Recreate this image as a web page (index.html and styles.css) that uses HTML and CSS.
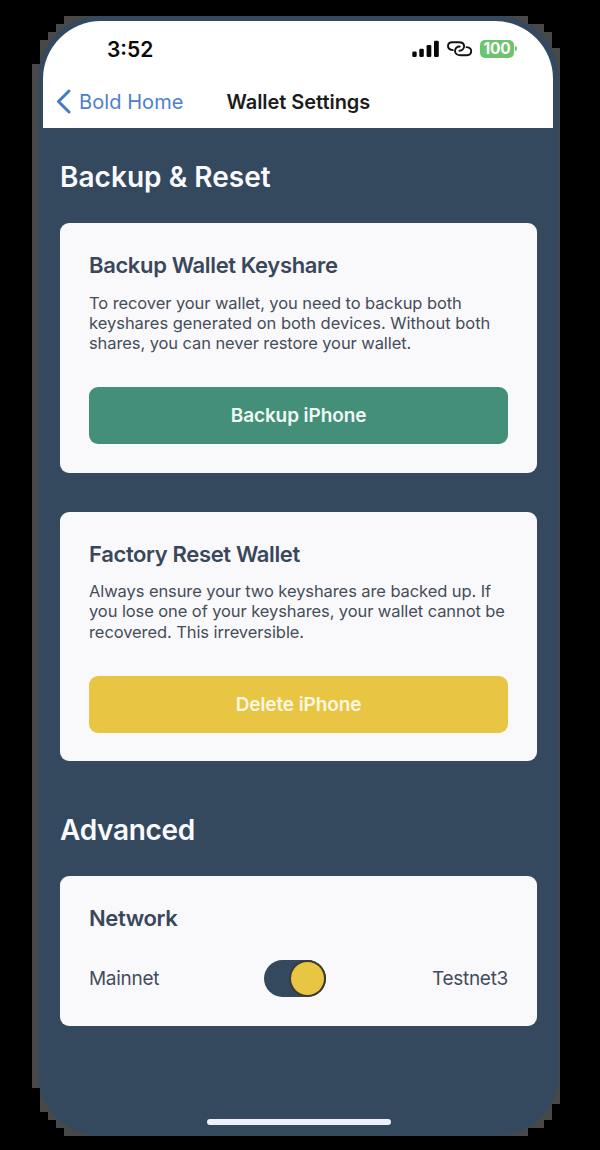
FILE: index.html
```
<!DOCTYPE html>
<html lang="en">
<head>
<meta charset="utf-8">
<title>Wallet Settings</title>
<link rel="stylesheet" href="styles.css">
</head>
<body>
<div class="halo">
<main class="phone">
  <header class="top">
    <div class="status">
      <span class="time">3:52</span>
      <div class="indicators">
        <svg class="signal" width="28" height="18" viewBox="0 0 28 18"><rect x="0.3" y="11.5" width="4.4" height="5.5" rx="1.3"/><rect x="7.3" y="8.8" width="4.5" height="8.2" rx="1.3"/><rect x="14.6" y="5" width="4.7" height="12" rx="1.3"/><rect x="22" y="0.8" width="4.8" height="16.2" rx="1.3"/></svg>
        <svg class="link" width="26" height="16" viewBox="0 0 26 16"><path d="M5.7 9.1C2.8 8.8 1 7.3 1 5.1 1 2.8 2.8 1.3 5.3 1.3H12c3.2 0 5.1 1.6 5.1 4S15.2 9.7 12.5 9.7"/><path d="M19.5 6.1c2.9.3 4.700 1.800 4.700 4 0 2.500-1.800 4.200-4.300 4.200h-6.400c-3.200 0-5.500-1.800-5.500-4.400s2-4.400 4.700-4.400"/></svg>
        <span class="battery">100</span><span class="battery-tip"></span>
      </div>
    </div>
    <nav class="nav">
      <a class="back"><svg width="16" height="26" viewBox="0 0 16 26"><path d="M13 2 2.500 12.500 13 23"/></svg><span>Bold Home</span></a>
      <h1>Wallet Settings</h1>
    </nav>
  </header>
  <div class="content">
    <h2>Backup &amp; Reset</h2>
    <section class="card">
      <h3>Backup Wallet Keyshare</h3>
      <p>To recover your wallet, you need to backup both<br><span class="wide">keyshares generated on both devices. Without both</span><br>shares, you can never restore your wallet.</p>
      <div class="button green">Backup iPhone</div>
    </section>
    <section class="card second">
      <h3>Factory Reset Wallet</h3>
      <p>Always ensure your two keyshares are backed up. If<br>you lose one of your keyshares, your wallet cannot be<br>recovered. This irreversible.</p>
      <div class="button yellow">Delete iPhone</div>
    </section>
    <h2 class="h-advanced">Advanced</h2>
    <section class="card network">
      <h3>Network</h3>
      <div class="row"><span class="mainnet">Mainnet</span><div class="switch"><i></i></div><span class="testnet">Testnet3</span></div>
    </section>
  </div>
  <div class="home-bar"></div>
</main>
</div>
</body>
</html>
```

FILE: styles.css
```
* { box-sizing: border-box; }
body { margin: 0; width: 600px; height: 1150px; background: #000; font-family: Inter, "Liberation Sans", sans-serif; color: #3a475b; overflow: hidden; }
h1, h2, h3, p { margin: 0; white-space: nowrap; font-weight: 600; }
.halo { width: 528px; height: 1136px; margin-left: 32px; padding: 16px 1.5px 0 6px; background: #484848;
  clip-path: polygon(32px 16px, 496px 16px, 496px 24px, 512px 24px, 512px 32px, 520px 32px, 520px 48px, 528px 48px, 528px 1104px, 520px 1104px, 520px 1120px, 512px 1120px, 512px 1128px, 496px 1128px, 496px 1136px, 32px 1136px, 32px 1128px, 24px 1128px, 24px 1120px, 16px 1120px, 16px 1112px, 8px 1112px, 8px 1088px, 0 1088px, 0 64px, 8px 64px, 8px 40px, 16px 40px, 16px 32px, 24px 32px, 24px 24px, 32px 24px); }
.phone { height: 1120px; padding: 5px 5.5px 0 5px; border-radius: 62px; background: #34495e; display: flex; flex-direction: column; }
.top { height: 106.5px; flex: none; background: #fff; border-radius: 58px 58px 0 0; }
.status { height: 55px; display: flex; justify-content: space-between; padding: 0 36px 0 64px; }
.time { font-size: 21px; font-weight: 600; line-height: 57px; color: #090909; }
.indicators { display: flex; align-items: center; }
.signal { margin-right: 7px; fill: #090909; }
.link { margin-right: 7px; fill: none; stroke: #111; stroke-width: 1.9; stroke-linecap: round; }
.battery { width: 34px; height: 18px; border-radius: 5px; background: #6cc46e; color: #fff; font-size: 15.5px; font-weight: 700; line-height: 18px; text-align: center; letter-spacing: -.2px; }
.battery-tip { width: 2px; height: 5px; margin-left: 1px; background: #6cc46e; border-radius: 0 2px 2px 0; }
.nav { display: flex; height: 51px; align-items: center; padding-left: 13px; }
.back { display: flex; align-items: center; width: 170.5px; color: #4c80cf; font-size: 20px; letter-spacing: .07px; white-space: nowrap; }
.back svg { flex: none; margin-right: 7px; fill: none; stroke: #407bd0; stroke-width: 3; stroke-linecap: round; stroke-linejoin: round; }
h1 { font-size: 20px; line-height: 24px; color: #1c1c20; letter-spacing: -.05px; }
.content { padding: 27px 16px 0 17px; }
h2 { color: #f9faff; font-size: 28px; line-height: 44px; letter-spacing: .03px; }
.card { height: 249.5px; margin-top: 24.5px; padding: 28px 29px; border-radius: 9px; background: #f9f9fc; }
h3 { font-size: 22px; line-height: 28px; color: #3a475b; letter-spacing: -.36px; }
p { margin-top: 13.5px; font-weight: 400; font-size: 16.5px; line-height: 20.4px; color: #464d59; letter-spacing: -.09px; }
.wide { letter-spacing: -.02px; }
.button { height: 57px; margin-top: 33.3px; border-radius: 9px; text-align: center; font-size: 19px; font-weight: 600; line-height: 57px; letter-spacing: -.1px; color: #f0faf5; }
.green { background: #448f79; }
.yellow { background: #e8c543; color: #fcf8e4; }
.second { height: 249px; margin-top: 39px; }
.h-advanced { margin-top: 47px; letter-spacing: -.3px; }
.network { height: 150px; margin-top: 24px; }
.row { display: flex; align-items: center; margin-top: 28px; height: 37px; font-size: 19px; letter-spacing: -.3px; color: #434c5c; }
.mainnet { width: 175px; }
.testnet { margin-left: auto; }
.switch { width: 62px; height: 37px; border-radius: 19px; padding: 2px; background: #34495e; display: flex; justify-content: flex-end; }
.switch i { width: 33px; height: 33px; border-radius: 50%; background: #e8c543; box-shadow: 0 0 0 2px #3a3b35; }
.home-bar { width: 184px; height: 6px; margin: auto auto 11px 164px; border-radius: 3px; background: #eef1fb; }
```
